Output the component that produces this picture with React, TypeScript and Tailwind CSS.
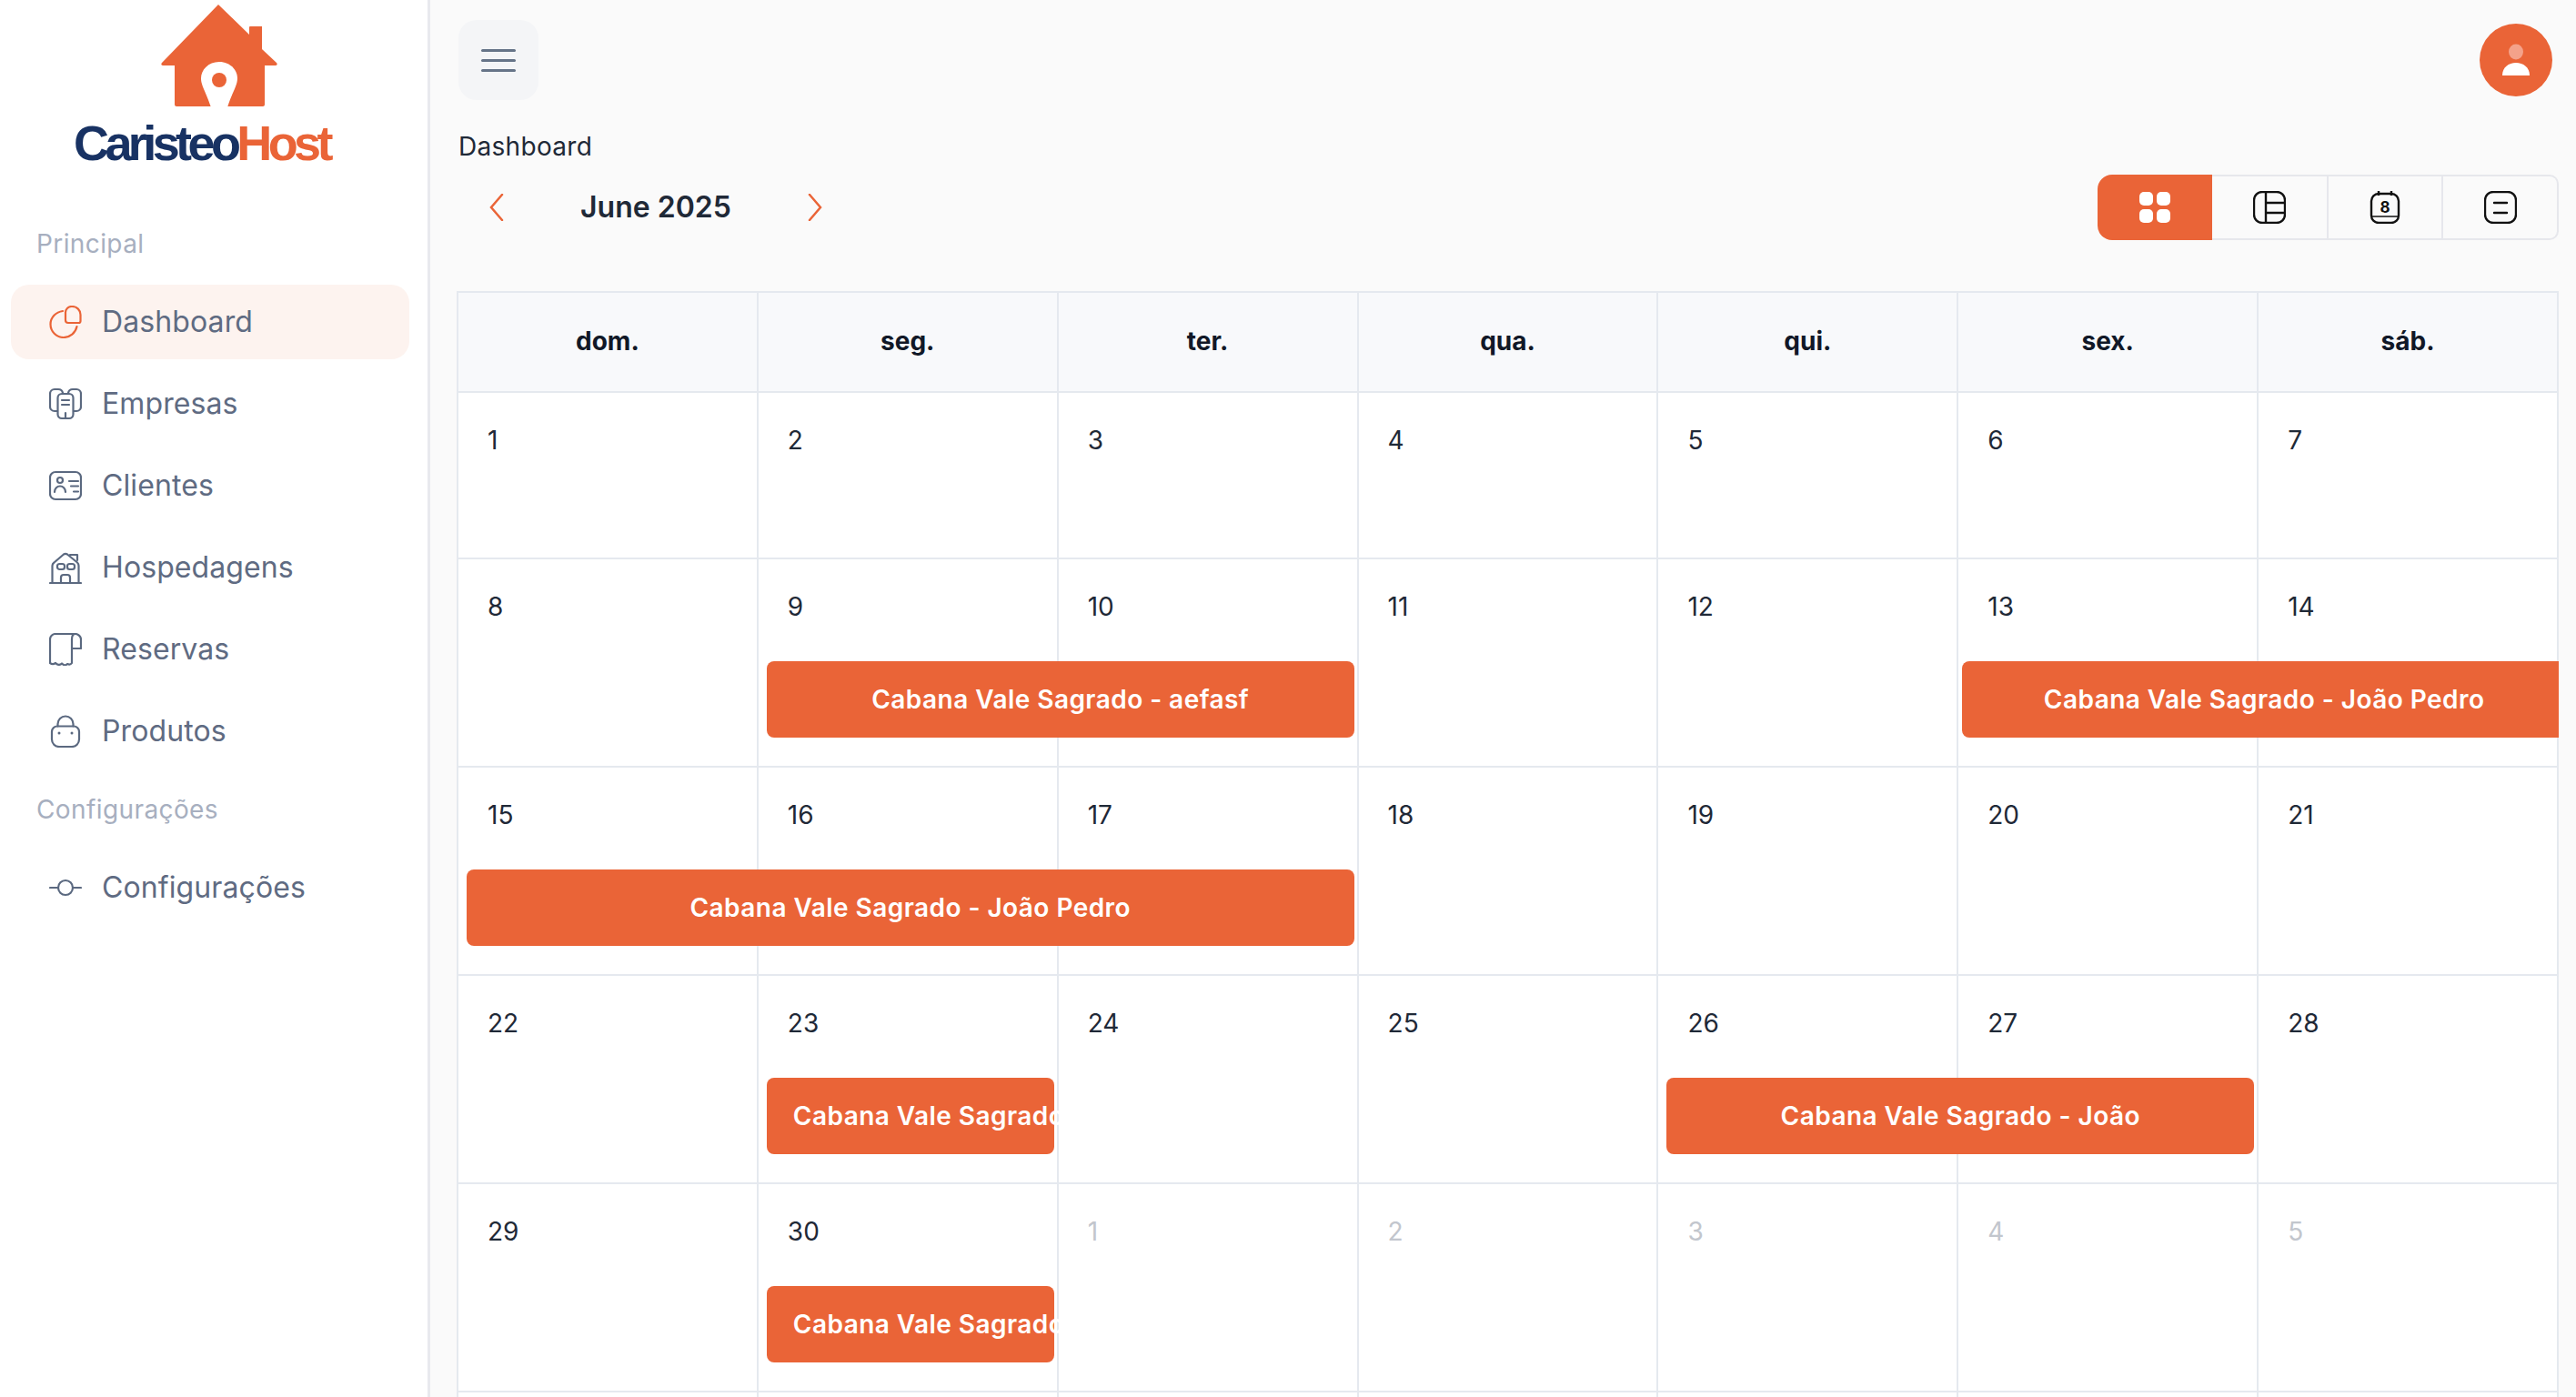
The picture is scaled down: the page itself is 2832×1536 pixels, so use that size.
const orange = "#ea6437";

function DashIcon() {
  return (
    <svg width="36" height="36" viewBox="0 0 36 36" fill="none" stroke="currentColor" strokeWidth="2.2" strokeLinecap="round" strokeLinejoin="round">
      <path d="M15 6C7.500 7 1.500 13 1.500 20.500a14.500 14.500 0 0 0 14.500 14.500c7 0 13-5 14.500-12" />
      <path d="M18 7.500a6.500 6.500 0 0 1 6.500-6.500h1a9 9 0 0 1 9 9v7a2 2 0 0 1-2 2H21a3 3 0 0 1-3-3z" />
    </svg>
  );
}

function EmpresasIcon() {
  return (
    <svg width="36" height="36" viewBox="0 0 36 36" fill="none" stroke="currentColor" strokeWidth="2.2" strokeLinecap="round" strokeLinejoin="round">
      <path d="M15 6c-.5-2.500-2-4-5-4H6a5 5 0 0 0-5 5v14a5 5 0 0 0 5 5h3" />
      <path d="M21 6c.5-2.500 2-4 5-4h4a5 5 0 0 1 5 5v14a5 5 0 0 1-5 5h-3" />
      <rect x="9.500" y="7" width="17" height="27" rx="4.500" />
      <path d="M14 14h8M14 19h8M18 34v-6" />
    </svg>
  );
}

function ClientesIcon() {
  return (
    <svg width="36" height="36" viewBox="0 0 36 36" fill="none" stroke="currentColor" strokeWidth="2.2" strokeLinecap="round" strokeLinejoin="round">
      <rect x="1" y="3" width="34" height="30" rx="6" />
      <circle cx="12" cy="12" r="3" />
      <path d="M6 25c0-4 3-6.500 6-6.500s6 2.500 6 6.500M22 13h10M24 18.500h8M27 24.500h5" />
    </svg>
  );
}

function HospedagensIcon() {
  return (
    <svg width="36" height="36" viewBox="0 0 36 36" fill="none" stroke="currentColor" strokeWidth="2.2" strokeLinecap="round" strokeLinejoin="round">
      <path d="M1 35h34M3.500 35V16c0-1.500.5-2.500 2-3.500L16 3.500c1.500-1 2.500-1 4 0l11 9c1 1 1.500 2 1.500 3.500v19" />
      <path d="M23 4h8v6" />
      <rect x="9" y="14" width="8" height="6" rx="2.500" />
      <rect x="20" y="14" width="8" height="6" rx="2.500" />
      <path d="M13 35v-6a3 3 0 0 1 3-3h4a3 3 0 0 1 3 3v6" />
    </svg>
  );
}

function ReservasIcon() {
  return (
    <svg width="36" height="36" viewBox="0 0 36 36" fill="none" stroke="currentColor" strokeWidth="2.2" strokeLinecap="round" strokeLinejoin="round">
      <path d="M28 1H7a6 6 0 0 0-6 6v26c2 1.500 4 1.500 6 0 2 2.500 5 2.500 7 .5 2 2 4 2.500 6 .5 2 1 4 .5 5-1V7c0-3 1-6 4-6s6 3 6 6v10h-10" />
    </svg>
  );
}

function ProdutosIcon() {
  return (
    <svg width="36" height="36" viewBox="0 0 36 36" fill="none" stroke="currentColor" strokeWidth="2.2" strokeLinecap="round" strokeLinejoin="round">
      <path d="M9.500 12.500V10a8.500 8.500 0 0 1 17 0v2.500" />
      <path d="M9 12.500h18a6 6 0 0 1 6 6V27a8 8 0 0 1-8 8H11a8 8 0 0 1-8-8v-8.500a6 6 0 0 1 6-6z" />
      <path d="M11 20h.01M25 20h.01" strokeWidth="3" />
    </svg>
  );
}

function ConfigIcon() {
  return (
    <svg width="36" height="36" viewBox="0 0 36 36" fill="none" stroke="currentColor" strokeWidth="2.2" strokeLinecap="round">
      <circle cx="18" cy="18" r="8" />
      <path d="M1 18h9M26 18h9" />
    </svg>
  );
}

function Logo() {
  return (
    <div className="flex flex-col items-start pt-[5px]">
      <svg className="ml-[177px]" width="128" height="113" viewBox="0 0 128 113" fill={orange}>
        <path d="M63 0L97 33V25a1 1 0 0 1 1-1h13v25l16 15c1 1 1 3-1 3h-12v43c0 1-1 2-2 2H17c-1 0-2-1-2-2V67H2c-2 0-2-2-1-3z" />
        <path d="M64 63c-12 0-20 9-20 18 0 8 5 14 11 32h18c6-18 11-24 11-32 0-9-8-18-20-18z" fill="#fff" />
        <circle cx="64" cy="83" r="8" />
      </svg>
      <div className="ml-[81px] mt-[12px] font-['Liberation_Sans',sans-serif] text-[54px] font-bold leading-[54px] tracking-[-4.6px] whitespace-nowrap">
        <span className="text-[#183263]">Caristeo</span>
        <span className="text-[#ea6437]">Host</span>
      </div>
    </div>
  );
}

function NavItem({ icon, label, active }: { icon: React.ReactNode; label: string; active?: boolean }) {
  return (
    <div className={`mx-3 flex h-[82px] w-[438px] items-center gap-[22px] rounded-[20px] pl-[42px] ${active ? "bg-[#fdf3ef]" : ""}`}>
      <span className={active ? "text-[#ea6437]" : "text-[#5b6980]"}>{icon}</span>
      <span className="text-[32px] leading-[48px] tracking-[0.1px] text-[#5f6b82]">{label}</span>
    </div>
  );
}

function Sidebar() {
  return (
    <aside className="h-full w-[473px] shrink-0 border-r-[3px] border-[#e8e9ee] bg-white">
      <Logo />
      <div className="mt-[63px] ml-[40px] text-[28px] leading-[42px] tracking-[0.4px] text-[#a7afbf]">Principal</div>
      <nav className="mt-6 flex flex-col gap-[8px]">
        <NavItem icon={<DashIcon />} label="Dashboard" active />
        <NavItem icon={<EmpresasIcon />} label="Empresas" />
        <NavItem icon={<ClientesIcon />} label="Clientes" />
        <NavItem icon={<HospedagensIcon />} label="Hospedagens" />
        <NavItem icon={<ReservasIcon />} label="Reservas" />
        <NavItem icon={<ProdutosIcon />} label="Produtos" />
      </nav>
      <div className="mt-[24px] ml-[40px] text-[28px] leading-[42px] tracking-[0.4px] text-[#a7afbf]">Configurações</div>
      <div className="mt-6">
        <NavItem icon={<ConfigIcon />} label="Configurações" />
      </div>
    </aside>
  );
}

function TopBar() {
  return (
    <header className="flex h-[135px] items-center justify-between pr-[7px] pb-[3px]">
      <button className="flex h-[88px] w-[88px] flex-col items-center justify-center gap-2 rounded-[20px] bg-[#f4f5f7] ml-[2px]">
        <span className="h-[3px] w-[38px] rounded-full bg-[#667488]" />
        <span className="h-[3px] w-[38px] rounded-full bg-[#667488]" />
        <span className="h-[3px] w-[38px] rounded-full bg-[#667488]" />
      </button>
      <div className="flex h-20 w-20 items-center justify-center rounded-full bg-[#ea6437]">
        <svg width="36" height="40" viewBox="0 0 36 40">
          <ellipse cx="18" cy="11" rx="8" ry="8.500" fill="#f4a28a" />
          <path d="M3 37c0-9 7-14 15-14s15 5 15 14z" fill="#fff" />
        </svg>
      </div>
    </header>
  );
}

function ViewSwitcher() {
  return (
    <div className="flex h-[72px] w-[507px]">
      <button className="flex h-full w-[126px] items-center justify-center rounded-l-[16px] bg-[#ea6437]">
        <svg width="36" height="36" viewBox="0 0 36 36" fill="#fff">
          <rect x="1" y="1" width="15" height="15" rx="5" />
          <rect x="20" y="1" width="15" height="15" rx="5" />
          <rect x="1" y="20" width="15" height="15" rx="5" />
          <rect x="20" y="20" width="15" height="15" rx="5" />
        </svg>
      </button>
      <button className="flex h-full w-[128px] items-center justify-center border-y-2 border-r-2 border-[#e6e7ec]">
        <svg width="36" height="36" viewBox="0 0 36 36" fill="none" stroke="#111" strokeWidth="2.400">
          <rect x="1" y="1" width="34" height="34" rx="9" />
          <path d="M14 1v34M14 13h21M14 24h21" />
        </svg>
      </button>
      <button className="flex h-full w-[126px] items-center justify-center border-y-2 border-r-2 border-[#e6e7ec]">
        <svg width="36" height="36" viewBox="0 0 36 36" fill="none" stroke="#111" strokeWidth="2.400">
          <rect x="3" y="3" width="30" height="32" rx="8" />
          <path d="M11 0v5M25 0v5" />
          <path d="M3 28h30" strokeWidth="1.500" />
          <text x="18" y="23.500" textAnchor="middle" fontSize="17" fontWeight="700" fill="#111" stroke="none" fontFamily="Inter, sans-serif">8</text>
        </svg>
      </button>
      <button className="flex h-full w-[127px] items-center justify-center rounded-r-[10px] border-y-2 border-r-2 border-[#e6e7ec]">
        <svg width="36" height="36" viewBox="0 0 36 36" fill="none" stroke="#111" strokeWidth="2.400" strokeLinecap="round">
          <rect x="1" y="1" width="34" height="34" rx="9" />
          <path d="M11 13h14M11 24h14" />
        </svg>
      </button>
    </div>
  );
}

function Toolbar() {
  return (
    <div className="mt-[10px] flex h-[72px] items-center">
      <svg className="ml-[36px]" width="16" height="30" viewBox="0 0 16 30" fill="none" stroke={orange} strokeWidth="2.500" strokeLinecap="round">
        <path d="M14 1L2 15l12 14" />
      </svg>
      <div className="ml-[84px] w-[250px] text-[32px] leading-[48px] font-semibold text-[#1f2937]">June 2025</div>
      <svg width="16" height="30" viewBox="0 0 16 30" fill="none" stroke={orange} strokeWidth="2.500" strokeLinecap="round">
        <path d="M2 1l12 14L2 29" />
      </svg>
      <div className="ml-auto">
        <ViewSwitcher />
      </div>
    </div>
  );
}

const colStarts = ["col-start-1", "col-start-2", "col-start-3", "col-start-4", "col-start-5", "col-start-6", "col-start-7"];

type Bar = { col: string; label: string; center?: boolean; left?: string; right?: string };

function EventBar({ col, label, center, left = "pl-[9px]", right = "mr-[5px]" }: Bar) {
  return (
    <div className={`${col} z-10 row-start-2 overflow-hidden ${left}`}>
      <div className={`flex h-[84px] items-center rounded-lg bg-[#ea6437] text-[28px] leading-[42px] font-semibold tracking-[0.45px] whitespace-nowrap text-white ${right} ${center ? "justify-center" : "pl-[29px]"}`}>
        {label}
      </div>
    </div>
  );
}

function Week({ days, muted = [], bars = [], height }: { days: number[]; muted?: number[]; bars?: Bar[]; height: string }) {
  return (
    <div className={`grid grid-cols-7 grid-rows-[112px_84px_1fr] border-b-2 border-[#e5e9ef] ${height}`}>
      {days.map((d, i) => (
        <div key={d} className={`${colStarts[i]} row-span-3 row-start-1 border-r-2 border-[#e5e9ef] pt-[31px] pl-[32px]`}>
          <span className={`text-[28px] leading-[42px] ${muted.includes(d) ? "text-[#c2c6cd]" : "text-[#1f2937]"}`}>{d}</span>
        </div>
      ))}
      {bars.map((b, i) => (
        <EventBar key={i} {...b} />
      ))}
    </div>
  );
}

function Calendar() {
  const heads = ["dom.", "seg.", "ter.", "qua.", "qui.", "sex.", "sáb."];
  return (
    <div className="mt-[56px] border-t-2 border-l-2 border-[#e5e9ef] bg-white">
      <div className="grid h-[110px] grid-cols-7 border-b-2 border-[#e5e9ef] bg-[#f8f9fb]">
        {heads.map((h) => (
          <div key={h} className="flex items-center justify-center border-r-2 border-[#e5e9ef] pb-[2px] text-[28px] font-bold text-[#111827]">
            {h}
          </div>
        ))}
      </div>
      <Week height="h-[183px]" days={[1, 2, 3, 4, 5, 6, 7]} />
      <Week
        height="h-[229px]"
        days={[8, 9, 10, 11, 12, 13, 14]}
        bars={[
          { col: "col-span-2 col-start-2", label: "Cabana Vale Sagrado - aefasf", center: true },
          { col: "col-span-2 col-start-6", label: "Cabana Vale Sagrado - João Pedro", center: true, left: "pl-[4px]", right: "mr-[-8px]" },
        ]}
      />
      <Week
        height="h-[229px]"
        days={[15, 16, 17, 18, 19, 20, 21]}
        bars={[{ col: "col-span-3 col-start-1", label: "Cabana Vale Sagrado - João Pedro", center: true }]}
      />
      <Week
        height="h-[229px]"
        days={[22, 23, 24, 25, 26, 27, 28]}
        bars={[
          { col: "col-span-1 col-start-2", label: "Cabana Vale Sagrado - João Pedro" },
          { col: "col-span-2 col-start-5", label: "Cabana Vale Sagrado - João", center: true },
        ]}
      />
      <Week
        height="h-[229px]"
        days={[29, 30, 1, 2, 3, 4, 5]}
        muted={[1, 2, 3, 4, 5]}
        bars={[{ col: "col-span-1 col-start-2", label: "Cabana Vale Sagrado - João Pedro" }]}
      />
      <div className="grid h-[229px] grid-cols-7">
        {heads.map((h) => (
          <div key={h} className="border-r-2 border-[#e5e9ef]" />
        ))}
      </div>
    </div>
  );
}

export default function App() {
  return (
    <div className="flex h-screen overflow-hidden bg-[#fafafa] font-['Inter',sans-serif]">
      <Sidebar />
      <main className="min-w-0 flex-1 overflow-hidden pr-[19px] pl-[29px]">
        <TopBar />
        <div className="pt-[5px] pl-[2px] text-[28px] leading-[42px] tracking-[0.3px] text-[#1f2937]">Dashboard</div>
        <Toolbar />
        <Calendar />
      </main>
    </div>
  );
}
